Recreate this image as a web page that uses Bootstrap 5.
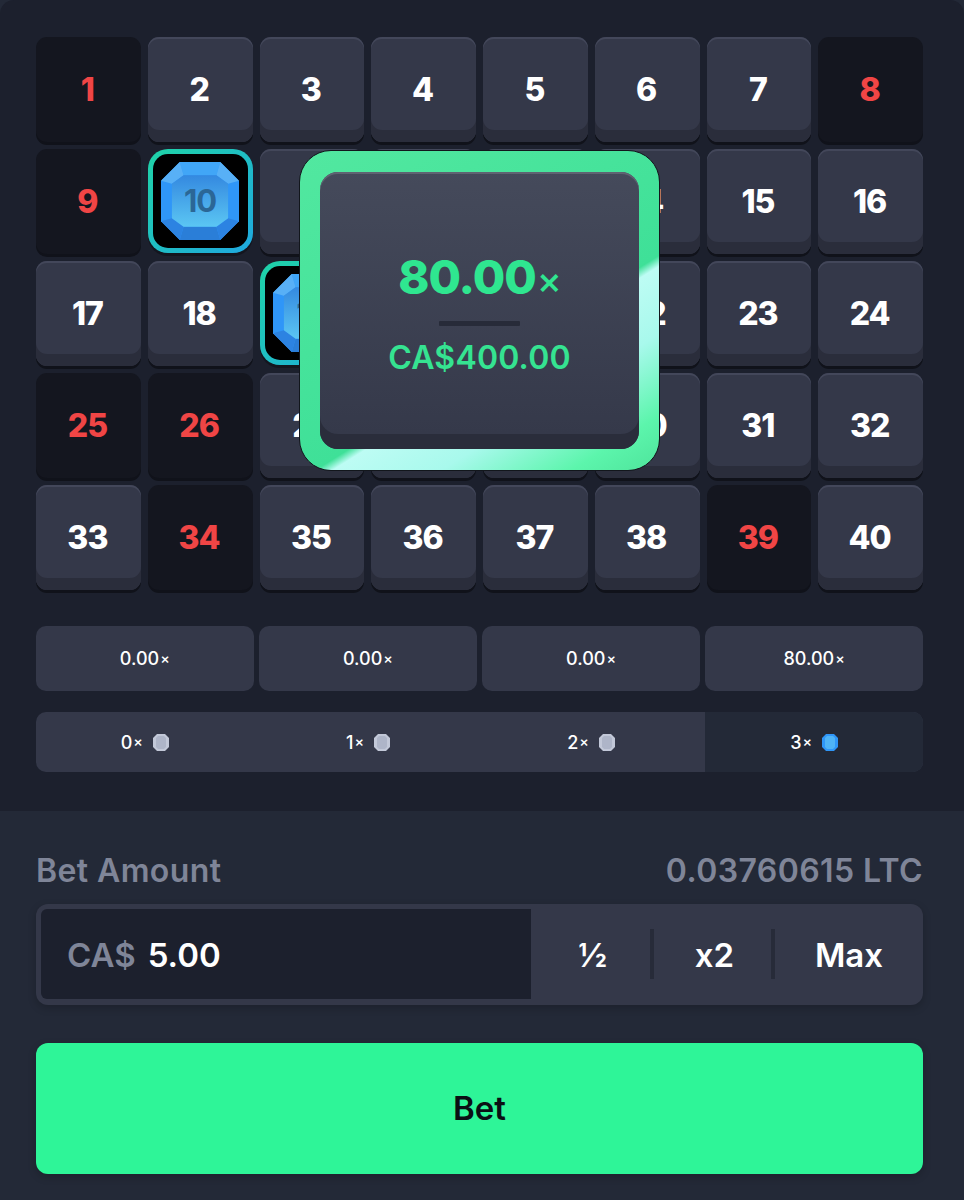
<!DOCTYPE html>
<html lang="en">
<head>
    <meta charset="UTF-8">
    <meta name="viewport" content="width=device-width, initial-scale=1.0">
    <link href="https://cdn.jsdelivr.net/npm/bootstrap@5.3.2/dist/css/bootstrap.min.css" rel="stylesheet" />
    <title>Keno</title>
    <style>
        body {
            background-color: #232937;
            font-family: "Inter", "Liberation Sans", sans-serif;
            color: #fff;
        }
        .game-panel {
            position: relative;
            background-color: #1c202d;
            border-radius: 14px 14px 0 0;
            padding: 37px 41px 39px 36px;
        }
        .tile-grid {
            display: grid;
            grid-template-columns: repeat(8, 1fr);
            gap: 7px;
        }
        .tile {
            height: 105px;
            padding-right: 2px;
            border-radius: 11px;
            background-color: #343849;
            box-shadow: inset 0 -12px 0 #2a2d3b, inset 0 2px 0 #43475a, 0 3px 0 #10121a;
            font-size: 32px;
            font-weight: 800;
            letter-spacing: -1px;
        }
        .tile.miss {
            background-color: #14161f;
            box-shadow: 0 3px 0 #10121a;
            color: #f04545;
        }
        .tile.hit {
            background: linear-gradient(135deg, #1fd3a6, #1fa8e0) border-box;
            padding: 5px;
            height: 104px;
            box-shadow: 0 3px 0 #14161f;
            border-radius: 20px;
        }
        .hit-inner {
            width: 100%;
            height: 100%;
            background-color: #000;
            border-radius: 15px;
            position: relative;
        }
        .gem-big { width: 78px; height: 78px; }
        .gem-label {
            position: absolute;
            inset: 0;
            font-size: 31px;
            font-weight: 700;
            color: #2b6796;
        }
        .pay-row { margin-top: 36px; gap: 5.5px; }
        .pay-box {
            height: 65px;
            border-radius: 10px;
            background-color: #343849;
            font-size: 18px;
            font-weight: 500;
        }
        .count-row {
            margin-top: 21px;
            height: 60px;
            gap: 5.5px;
            border-radius: 10px;
            background-color: #343849;
            font-size: 18px;
            font-weight: 500;
            overflow: hidden;
        }
        .count-cell.active { background-color: #232937; }
        .x-mark { font-size: .8em; font-weight: 500; margin-left: 1px; }
        .gem-small { width: 16px; height: 17px; margin-left: 10px; }
        .bet-panel { padding: 41px 41px 26px 36px; }
        .bet-label {
            font-size: 32px;
            font-weight: 600;
            line-height: 37px;
            letter-spacing: .4px;
            color: #7f8598;
            margin-bottom: 15px;
        }
        .amount-box {
            height: 101px;
            border-radius: 12px;
            background-color: #343849;
            padding: 5px 0 6px 5px;
            box-shadow: 0 3px 8px rgba(0, 0, 0, .2);
            font-size: 33px;
            font-weight: 600;
        }
        .amount-field {
            width: 490px;
            flex-shrink: 0;
            background-color: #1c202d;
            padding: 3px 0 0 26px;
            border-radius: 6px 0 0 6px;
        }
        .amount-unit { color: #7f8598; margin-right: 12px; }
        .amount-half { width: 119px; padding: 3px 0 0 4px; }
        .amount-double { width: 117px; padding: 3px 0 0 4px; }
        .amount-max { width: 148px; padding-top: 3px; }
        .amount-sep { width: 4px; height: 50px; background-color: #272b39; }
        .bet-btn {
            display: block;
            width: 100%;
            height: 131px;
            margin-top: 38px;
            border: 0;
            border-radius: 12px;
            background-color: #2ef598;
            color: #0b0f14;
            font-size: 33px;
            font-weight: 600;
            box-shadow: 0 3px 8px rgba(0, 0, 0, .2);
        }
        .win-popup {
            position: absolute;
            left: 299px;
            top: 150px;
            width: 361px;
            height: 321px;
            padding: 21px 20px;
            border-radius: 32px;
            border: 1px solid #12161c;
            background: linear-gradient(148deg, #52e8a0 0%, #3fe098 60.5%, #bdfcf4 62.5%, #a8f9ec 75%, #5cf5ac 90%, #4ee49b 100%);
        }
        .win-card {
            height: 100%;
            border-radius: 18px;
            background: linear-gradient(#454a5b, #343849);
            box-shadow: inset 0 -15px 0 #2a2d3b, inset 0 2px 0 #5f6372;
            padding-top: 6px;
        }
        .win-multi { font-size: 47px; font-weight: 800; line-height: 1; letter-spacing: -1px; color: #2fe690; }
        .win-rule { width: 81px; height: 5px; margin: 21px 0 16px; background-color: #272b39; border-radius: 1px; }
        .win-amount { font-size: 32px; font-weight: 600; line-height: 1; letter-spacing: .2px; color: #35e391; }
    </style>
</head>
<body class="m-0">
    <svg width="0" height="0" class="position-absolute">
        <defs>
            <linearGradient id="tableBlue" x1="0" y1="0" x2="0" y2="1">
                <stop offset="0" stop-color="#3489e0" />
                <stop offset="1" stop-color="#5bc6f3" />
            </linearGradient>
            <symbol id="gem" viewBox="0 0 100 100">
                <polygon points="0,24 24,0 76,0 100,24 100,76 76,100 24,100 0,76" fill="#2f96f8" />
                <polygon points="24,0 76,0 71,17 29,17" fill="#41a6f7" />
                <polygon points="0,24 24,0 29,17 14,28" fill="#58b0f6" />
                <polygon points="76,0 100,24 86,28 71,17" fill="#58b0f6" />
                <polygon points="24,100 76,100 71,83 29,83" fill="#2a7ed8" />
                <polygon points="0,76 14,72 29,83 24,100" fill="#2c83e2" />
                <polygon points="100,76 86,72 71,83 76,100" fill="#2c83e2" />
                <polygon points="14,28 29,17 71,17 86,28 86,72 71,83 29,83 14,72" fill="url(#tableBlue)" />
            </symbol>
            <symbol id="gem-mini-grey" viewBox="0 0 16 17">
                <polygon points="0,4 4,0 12,0 16,4 16,13 12,17 4,17 0,13" fill="#c2c8d8" />
                <polygon points="3,4 5,2 11,2 13,4 13,13 11,15 5,15 3,13" fill="#aeb5c8" />
            </symbol>
            <symbol id="gem-mini-blue" viewBox="0 0 16 17">
                <polygon points="0,4 4,0 12,0 16,4 16,13 12,17 4,17 0,13" fill="#2f96f8" />
                <polygon points="3,4 5,2 11,2 13,4 13,13 11,15 5,15 3,13" fill="#4fb4f6" />
            </symbol>
        </defs>
    </svg>

    <div class="game-panel">
        <div class="tile-grid">
            <div class="tile miss d-flex align-items-center justify-content-center">1</div>
            <div class="tile d-flex align-items-center justify-content-center">2</div>
            <div class="tile d-flex align-items-center justify-content-center">3</div>
            <div class="tile d-flex align-items-center justify-content-center">4</div>
            <div class="tile d-flex align-items-center justify-content-center">5</div>
            <div class="tile d-flex align-items-center justify-content-center">6</div>
            <div class="tile d-flex align-items-center justify-content-center">7</div>
            <div class="tile miss d-flex align-items-center justify-content-center">8</div>

            <div class="tile miss d-flex align-items-center justify-content-center">9</div>
            <div class="tile hit">
                <div class="hit-inner d-flex align-items-center justify-content-center">
                    <svg class="gem-big"><use href="#gem" /></svg>
                    <span class="gem-label d-flex align-items-center justify-content-center">10</span>
                </div>
            </div>
            <!-- 11, 12, 13 sit fully under the win popup -->
            <div class="tile"></div>
            <div class="tile"></div>
            <div class="tile"></div>
            <div class="tile d-flex align-items-center justify-content-center">14</div>
            <div class="tile d-flex align-items-center justify-content-center">15</div>
            <div class="tile d-flex align-items-center justify-content-center">16</div>

            <div class="tile d-flex align-items-center justify-content-center">17</div>
            <div class="tile d-flex align-items-center justify-content-center">18</div>
            <div class="tile hit">
                <div class="hit-inner d-flex align-items-center justify-content-center">
                    <svg class="gem-big"><use href="#gem" /></svg>
                    <span class="gem-label d-flex align-items-center justify-content-center">19</span>
                </div>
            </div>
            <!-- 20, 21 sit fully under the win popup -->
            <div class="tile"></div>
            <div class="tile"></div>
            <div class="tile d-flex align-items-center justify-content-center">22</div>
            <div class="tile d-flex align-items-center justify-content-center">23</div>
            <div class="tile d-flex align-items-center justify-content-center">24</div>

            <div class="tile miss d-flex align-items-center justify-content-center">25</div>
            <div class="tile miss d-flex align-items-center justify-content-center">26</div>
            <div class="tile d-flex align-items-center justify-content-center">27</div>
            <!-- 28, 29 sit fully under the win popup -->
            <div class="tile"></div>
            <div class="tile"></div>
            <div class="tile d-flex align-items-center justify-content-center">30</div>
            <div class="tile d-flex align-items-center justify-content-center">31</div>
            <div class="tile d-flex align-items-center justify-content-center">32</div>

            <div class="tile d-flex align-items-center justify-content-center">33</div>
            <div class="tile miss d-flex align-items-center justify-content-center">34</div>
            <div class="tile d-flex align-items-center justify-content-center">35</div>
            <div class="tile d-flex align-items-center justify-content-center">36</div>
            <div class="tile d-flex align-items-center justify-content-center">37</div>
            <div class="tile d-flex align-items-center justify-content-center">38</div>
            <div class="tile miss d-flex align-items-center justify-content-center">39</div>
            <div class="tile d-flex align-items-center justify-content-center">40</div>
        </div>

        <div class="pay-row d-flex">
            <div class="pay-box flex-fill w-25 d-flex align-items-center justify-content-center">0.00<span class="x-mark">×</span></div>
            <div class="pay-box flex-fill w-25 d-flex align-items-center justify-content-center">0.00<span class="x-mark">×</span></div>
            <div class="pay-box flex-fill w-25 d-flex align-items-center justify-content-center">0.00<span class="x-mark">×</span></div>
            <div class="pay-box flex-fill w-25 d-flex align-items-center justify-content-center">80.00<span class="x-mark">×</span></div>
        </div>

        <div class="count-row d-flex">
            <div class="count-cell flex-fill w-25 d-flex align-items-center justify-content-center">0<span class="x-mark">×</span><svg class="gem-small"><use href="#gem-mini-grey" /></svg></div>
            <div class="count-cell flex-fill w-25 d-flex align-items-center justify-content-center">1<span class="x-mark">×</span><svg class="gem-small"><use href="#gem-mini-grey" /></svg></div>
            <div class="count-cell flex-fill w-25 d-flex align-items-center justify-content-center">2<span class="x-mark">×</span><svg class="gem-small"><use href="#gem-mini-grey" /></svg></div>
            <div class="count-cell active flex-fill w-25 d-flex align-items-center justify-content-center">3<span class="x-mark">×</span><svg class="gem-small"><use href="#gem-mini-blue" /></svg></div>
        </div>

        <div class="win-popup">
            <div class="win-card d-flex flex-column align-items-center justify-content-center">
                <div class="win-multi">80.00<span class="x-mark">×</span></div>
                <div class="win-rule"></div>
                <div class="win-amount">CA$400.00</div>
            </div>
        </div>
    </div>

    <div class="bet-panel">
        <div class="bet-label d-flex justify-content-between">
            <span>Bet Amount</span>
            <span>0.03760615 LTC</span>
        </div>
        <div class="amount-box d-flex">
            <div class="amount-field d-flex align-items-center">
                <span class="amount-unit">CA$</span>
                <span>5.00</span>
            </div>
            <div class="flex-fill d-flex align-items-center">
                <div class="amount-half text-center">½</div>
                <div class="amount-sep"></div>
                <div class="amount-double text-center">x2</div>
                <div class="amount-sep"></div>
                <div class="amount-max text-center">Max</div>
            </div>
        </div>
        <button type="button" class="bet-btn">Bet</button>
    </div>
</body>
</html>
